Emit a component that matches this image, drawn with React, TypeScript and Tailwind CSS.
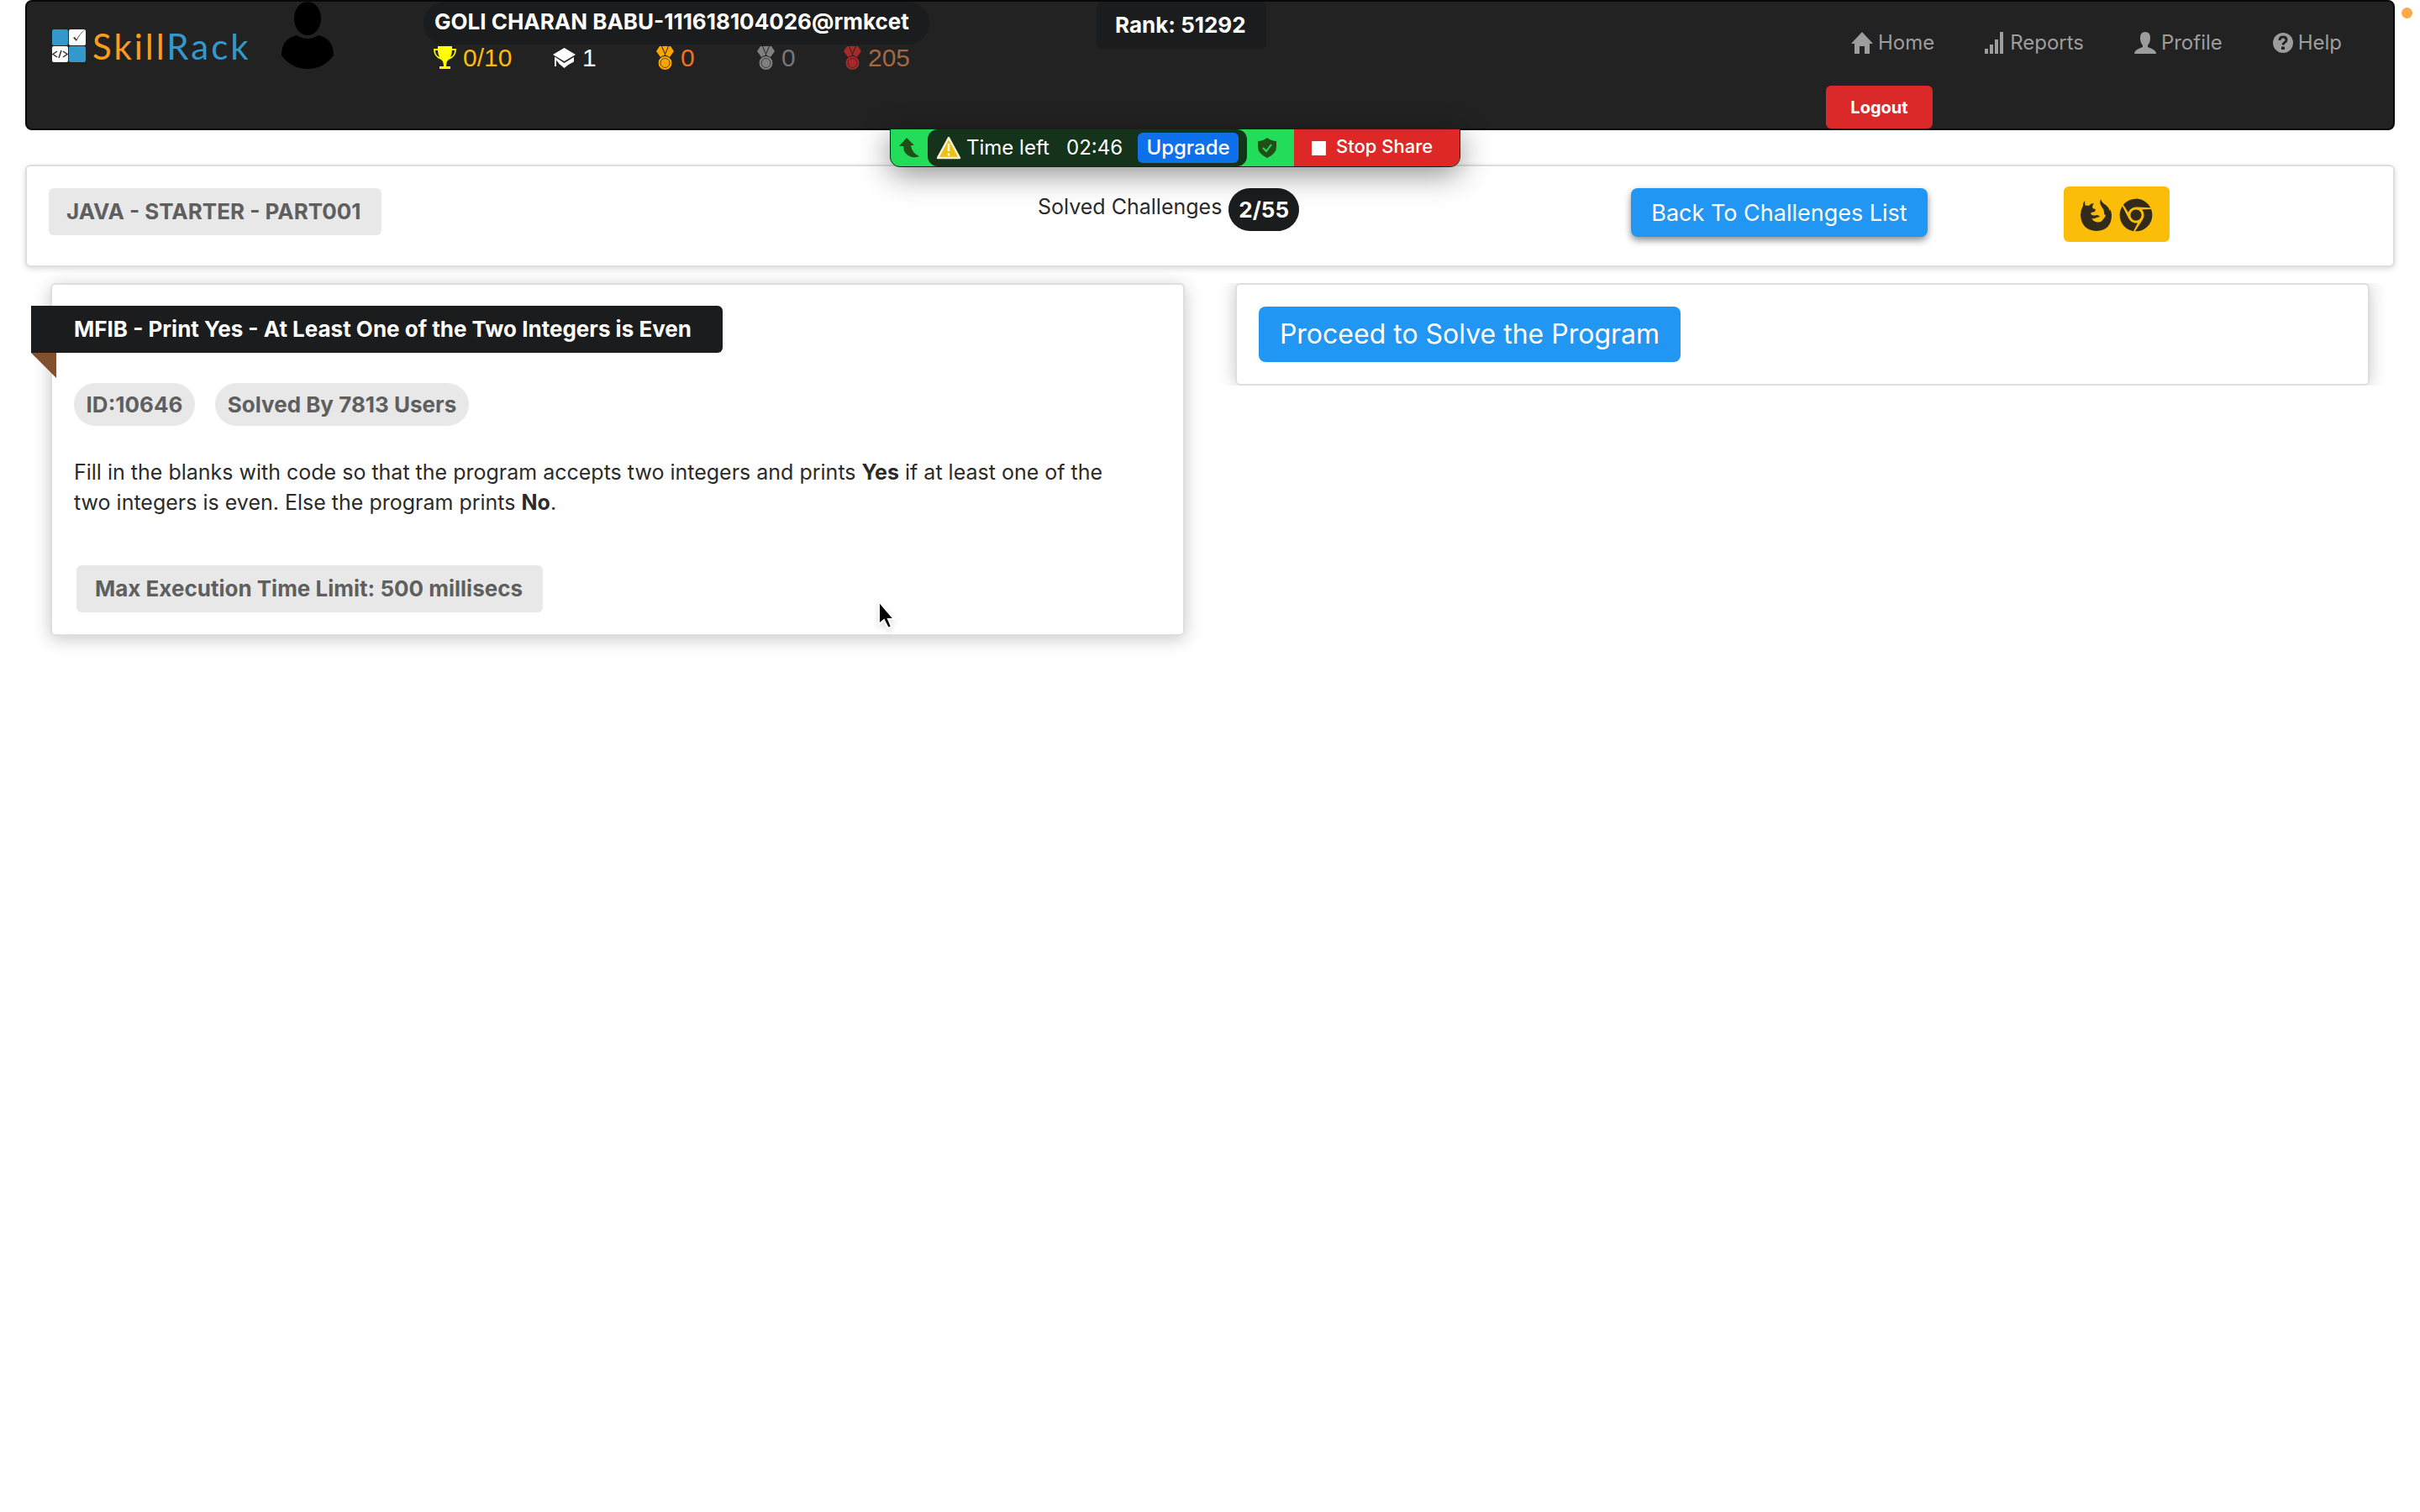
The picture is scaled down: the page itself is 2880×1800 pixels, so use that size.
import React from "react";
import { FaChrome } from "react-icons/fa";

const Medal = ({ color }: { color: string }) => (
  <svg viewBox="0 0 21 28" className="h-7 w-[21px]" fill={color}>
    <path d="M4 0h5l3 7-4 6H5L0 6z" />
    <path d="M17 0h-5l-3 7 4 6h3l5-7z" />
    <path d="M6 0h9l-4.500 10z" />
    <path d="M6.500 0l4 9.500L14.500 0" fill="none" stroke="#222" strokeWidth="1" />
    <circle cx="10.500" cy="20" r="8.500" stroke="#222" strokeWidth="1" />
    <circle cx="10.500" cy="20" r="5.500" fill="none" stroke="#222" strokeWidth="1" strokeOpacity=".7" />
  </svg>
);

const Fox = () => (
  <svg viewBox="0 0 38 38" className="size-[38px]" fill="currentColor">
    <path d="M24 0q-2 5 1 9 4 4 3 9l2 1q-1 3-3 5-3 5-9 3-3-1-5-4 3 1 6-1l4-1q-1-2-4-2-3 1-5 0-3-1-1-3l4-1 1-3q-3 0-4-2 0-3 2-5-4 0-6 3-3-1-4 0-1-2-1-6-2 2-2 6-3 5-3 11 1 18 19 19 18-1 18-19 0-4-2-7v3q-1-5-5-8-5-3-6-7z" />
  </svg>
);

const navLink = "flex items-center gap-[6px] text-[24px] leading-9 text-[#9d9d9d]";

export default function App() {
  return (
    <div className="relative min-h-screen bg-white px-[30px] font-[Inter,sans-serif] text-[26px] leading-9 text-[#2b2b2b]">
      <header className="flex h-[155px] rounded-lg border-2 border-[#080808] bg-[#222] pl-[30px]">
        <a href="#" aria-label="SkillRack" className="mt-8 flex h-12 w-[273px] items-start">
          <svg viewBox="0 0 42 42" className="h-[42px] w-[42px]">
            <rect x="0" y="1" width="19" height="19" rx="2" fill="#3399cc" />
            <rect x="20" y="1" width="20" height="19" rx="2" fill="#fff" />
            <rect x="0" y="21" width="19" height="19" rx="2" fill="#fff" />
            <rect x="20" y="21" width="20" height="19" rx="2" fill="#3399cc" />
            <path d="M25 11l2-1 2 3q5-9 12-13-8 6-12 15z" fill="#333" />
            <path d="M6 27l-5 3.500 5 3.500M13 27l5 3.500-5 3.500M11 26l-3 9" fill="none" stroke="#333" strokeWidth="1.500" />
          </svg>
          <span className="ml-[6px] font-[Lato,sans-serif] text-[42px] leading-[42px] tracking-[3px] text-[#f99d1c]">
            Skill<span className="text-[#3399cc]">Rack</span>
          </span>
        </a>
        <svg viewBox="0 0 62 80" className="h-20 w-[62px]">
          <ellipse cx="31" cy="20" rx="16" ry="20" />
          <path d="M0 64Q0 44 18 40q13 8 26 0 18 4 18 24Q50 80 31 80T0 64z" />
        </svg>
        <div className="ml-[107px] w-[801px]">
          <div className="h-[51px] w-[602px] rounded-full bg-[#1b1c1d] px-[13px] pt-[6px] font-bold text-white">
            GOLI CHARAN BABU-111618104026@rmkcet
          </div>
          <div className="ml-3 flex h-8 items-center font-['Liberation_Sans',sans-serif] text-[30px] leading-8">
            <div className="flex w-[142px] items-center gap-2 text-[#fbbd08]">
              <svg viewBox="0 0 27 28" className="h-7 w-[27px]" fill="#ff0">
                <path d="M5 0h17v3h5q0 10-9 13-3 2-3 8h5v3H7v-3h5q0-6-3-8Q0 13 0 3h5zM2 5q0 6 5 8Q5 9 5 5zm20 0q0 4-2 8 5-2 5-8z" />
              </svg>
              0/10
            </div>
            <div className="flex w-[123px] items-center gap-2 text-white">
              <svg viewBox="0 0 27 24" className="h-6 w-[27px]" fill="#fff">
                <path d="M13.500 0L27 8l-13.500 8L0 8zM2 10.500l2 1.200L13.500 18 25 11v5.500L18.500 20l-5 4-6-5L4 14.500V22H2z" />
              </svg>
              1
            </div>
            <div className="flex w-[120px] items-center gap-2 text-[#f2711c]"><Medal color="#ffa500" />0</div>
            <div className="flex w-[103px] items-center gap-2 text-[#767676]"><Medal color="#808080" />0</div>
            <div className="flex items-center gap-2 text-[#a5673f]"><Medal color="#a52a2a" />205</div>
          </div>
        </div>
        <div className="h-14 w-[202px] rounded-md bg-[#1b1c1d] px-[22px] pt-[10px] font-bold text-white">Rank: 51292</div>
        <nav className="ml-auto mr-[61px] w-[614px]">
          <div className="flex justify-between pl-[30px] pt-[31px]">
            <a href="#" className={navLink}>
              <svg viewBox="0 0 26 26" className="size-[26px]" fill="#9d9d9d"><path d="M13 0l13 14h-4v12h-6v-9h-6v9H4V14H0z" /></svg>
              Home
            </a>
            <a href="#" className={navLink}>
              <svg viewBox="0 0 24 26" className="h-[26px] w-6" fill="#9d9d9d"><path d="M0 20h4v6H0zM6 15h4v11H6zM12 9h4v17h-4zM18 0h4v26h-4z" /></svg>
              Reports
            </a>
            <a href="#" className={navLink}>
              <svg viewBox="0 0 26 26" className="size-[26px]" fill="#9d9d9d"><path d="M13 0q6 0 6 7 0 6-3 9v2q10 3 10 8H0q0-5 10-8v-2q-3-3-3-9 0-7 6-7z" /></svg>
              Profile
            </a>
            <a href="#" className={navLink}>
              <svg viewBox="0 0 24 24" className="size-6"><circle cx="12" cy="12" r="12" fill="#9d9d9d" /><path d="M8 9q0-4 4-4t4 3.500q0 2-2 3-2 1-2 3" fill="none" stroke="#222" strokeWidth="3" /><rect x="10" y="16.500" width="4" height="3.500" fill="#222" /></svg>
              Help
            </a>
          </div>
          <button className="mt-[33px] h-[51px] w-[127px] rounded-md bg-[#db2828] text-[20px] font-bold text-white">Logout</button>
        </nav>
      </header>

      <div className="absolute right-[9px] top-[9px] size-[13px] rounded-full bg-[#ffa947]" />

      <div className="absolute left-[1059px] top-[153px] flex h-[46px] w-[679px] overflow-hidden rounded-b-xl border border-[#1c1c1c] bg-[#22dc5a] text-[24px] text-white shadow-[0_8px_36px_rgba(0,0,0,0.45)]">
        <div className="flex w-11 items-center justify-center">
          <svg viewBox="0 0 24 24" className="size-6" fill="#1f4f16"><path d="M9 0l9 9h-4q1 9 10 13-4 2-9 1Q5 20 5 10H0z" /></svg>
        </div>
        <div className="flex w-[380px] items-center rounded-xl bg-[#15321a] pl-[10px]">
          <svg viewBox="0 0 30 28" className="h-7 w-[30px]"><path d="M15 2L28 26H2z" fill="#f0c010" stroke="#f4f0dc" strokeWidth="2.500" strokeLinejoin="round" /><path d="M15 9v9M15 20.500v3" stroke="#fff" strokeWidth="2.500" /></svg>
          <span className="ml-[6px] w-[119px]">Time left</span>
          <span className="w-[85px]">02:46</span>
          <button className="h-9 w-[120px] rounded-md bg-[#0e71eb] text-[24px] font-medium">Upgrade</button>
        </div>
        <div className="flex w-14 items-center pl-[13px]">
          <svg viewBox="0 0 22 24" className="h-6 w-[22px]"><path d="M11 0q5 4 11 4v7q0 8-11 13Q0 19 0 11V4q6 0 11-4z" fill="#1f4f16" /><path d="M6 12l4 4 6-8" fill="none" stroke="#22dc5a" strokeWidth="2" /></svg>
        </div>
        <button className="flex flex-1 items-center gap-3 bg-[#de2828] pb-1 pl-[21px] text-[22px] font-medium"><span className="mt-1 size-[17px] bg-white" />Stop Share</button>
      </div>

      <section className="mt-[41px] flex h-[122px] items-start rounded-md border-2 border-[#dedede] pl-[26px] pt-[26px] shadow-[0_2px_6px_rgba(0,0,0,0.15)]">
        <div className="flex w-[1177px]">
          <div className="flex h-14 w-[396px] items-center rounded-md bg-[#e8e8e8] px-[21px] font-bold text-[#5f5f5f]">JAVA - STARTER - PART001</div>
        </div>
        <div className="flex w-[706px] items-start">
          <span className="mt-1 text-[25px]">Solved Challenges</span>
          <span className="ml-2 flex h-[51px] items-center rounded-full bg-[#1b1c1d] px-3 font-bold text-white">2/55</span>
        </div>
        <div className="w-[515px]">
          <button className="h-[58px] w-[353px] rounded-lg bg-[#2196f3] pt-px text-[27px] text-white shadow-[0_4px_8px_rgba(0,0,0,0.45)]">Back To Challenges List</button>
        </div>
        <div className="-mt-[2px] flex h-[66px] w-[126px] items-center justify-center gap-2 rounded-md bg-[#fbbd08] pt-[2px] text-[40px] text-[#322b1c]">
          <Fox /><FaChrome />
        </div>
      </section>

      <main className="mt-[19px] grid grid-cols-2 items-start gap-[60px] px-[30px]">
        <section className="h-[420px] rounded-md border-2 border-[#dedede] px-[26px] pt-[25px] shadow-[0_4px_20px_rgba(34,36,38,0.25)]">
          <div className="relative -ml-[51px] flex h-14 w-[823px] items-center rounded-r-md bg-[#1b1c1d] pl-[51px] font-bold text-white">
            MFIB - Print Yes - At Least One of the Two Integers is Even
            <svg viewBox="0 0 30 30" className="absolute left-0 top-full size-[30px]"><path d="M0 0h30v30z" fill="#80502f" /></svg>
          </div>
          <div className="mt-9 flex gap-6 font-bold text-[#5f5f5f]">
            <span className="flex h-[51px] w-36 items-center justify-center rounded-full bg-[#e8e8e8]">ID:10646</span>
            <span className="flex h-[51px] w-[302px] items-center justify-center rounded-full bg-[#e8e8e8]">Solved By 7813 Users</span>
          </div>
          <p className="mt-[37px] max-w-[1262px] text-[25px]">
            Fill in the blanks with code so that the program accepts two integers and prints <b>Yes</b> if at least one of the two integers is even. Else the program prints <b>No</b>.
          </p>
          <div className="ml-[3px] mt-[57px] flex h-14 w-[555px] items-center rounded-md bg-[#e8e8e8] px-[22px] font-bold text-[#5f5f5f]">Max Execution Time Limit: 500 millisecs</div>
        </section>
        <section className="rounded-md border-2 border-[#dedede] p-[26px] shadow-[0_0_20px_rgba(34,36,38,0.25)] [clip-path:inset(0_-24px)]">
          <button className="block h-[66px] w-[502px] rounded-lg bg-[#2196f3] text-[32px] text-white">Proceed to Solve the Program</button>
        </section>
      </main>

      <svg viewBox="0 0 22 36" className="absolute left-[1044px] top-[714px] h-9 w-[22px] drop-shadow-md"><path d="M2 2v27l6-5 5 10 4-2-4-9h7z" fill="#000" stroke="#fff" strokeWidth="2" /></svg>
    </div>
  );
}
